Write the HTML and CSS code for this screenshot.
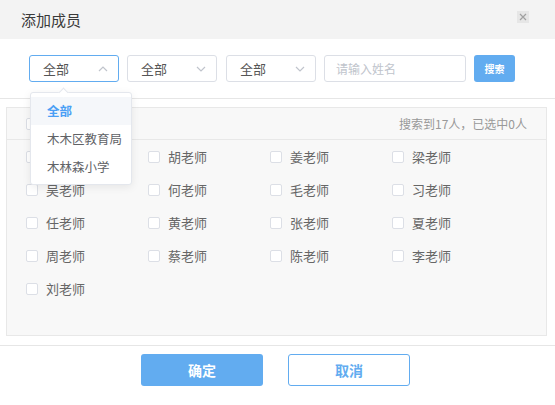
FILE: index.html
```html
<!DOCTYPE html>
<html lang="zh">
<head>
<meta charset="utf-8">
<title>添加成员</title>
<link rel="stylesheet" href="styles.css">
</head>
<body>
<div class="dialog">
  <div class="header">
    <span class="title">添加成员</span>
    <span class="close">
      <svg width="8" height="8" viewBox="0 0 8 8"><path d="M1 1L7 7M7 1L1 7" stroke="#a0a0a0" stroke-width="1.2"/></svg>
    </span>
  </div>
  <div class="filters">
    <div class="select active">
      <span>全部</span>
      <svg class="chev" width="10" height="6" viewBox="0 0 10 6"><path d="M1 5L5 1L9 5" fill="none" stroke="#c0c4cc" stroke-width="1.2"/></svg>
      <div class="dropdown">
        <div class="arrow"></div>
        <div class="opt selected">全部</div>
        <div class="opt">木木区教育局</div>
        <div class="opt">木林森小学</div>
      </div>
    </div>
    <div class="select">
      <span>全部</span>
      <svg class="chev" width="10" height="6" viewBox="0 0 10 6"><path d="M1 1L5 5L9 1" fill="none" stroke="#c0c4cc" stroke-width="1.2"/></svg>
    </div>
    <div class="select s3">
      <span>全部</span>
      <svg class="chev" width="10" height="6" viewBox="0 0 10 6"><path d="M1 1L5 5L9 1" fill="none" stroke="#c0c4cc" stroke-width="1.2"/></svg>
    </div>
    <div class="input">请输入姓名</div>
    <div class="search">搜索</div>
  </div>
  <div class="divider"></div>
  <div class="listbox">
    <div class="list-head">
      <span class="cb"></span>
      <span class="count">搜索到17人，已选中0人</span>
    </div>
    <div class="grid">
      <div class="item"><span class="cb"></span>吴老师</div>
      <div class="item"><span class="cb"></span>胡老师</div>
      <div class="item"><span class="cb"></span>姜老师</div>
      <div class="item"><span class="cb"></span>梁老师</div>
      <div class="item"><span class="cb"></span>吴老师</div>
      <div class="item"><span class="cb"></span>何老师</div>
      <div class="item"><span class="cb"></span>毛老师</div>
      <div class="item"><span class="cb"></span>习老师</div>
      <div class="item"><span class="cb"></span>任老师</div>
      <div class="item"><span class="cb"></span>黄老师</div>
      <div class="item"><span class="cb"></span>张老师</div>
      <div class="item"><span class="cb"></span>夏老师</div>
      <div class="item"><span class="cb"></span>周老师</div>
      <div class="item"><span class="cb"></span>蔡老师</div>
      <div class="item"><span class="cb"></span>陈老师</div>
      <div class="item"><span class="cb"></span>李老师</div>
      <div class="item"><span class="cb"></span>刘老师</div>
    </div>
  </div>
  <div class="divider foot-line"></div>
  <div class="footer">
    <div class="btn primary">确定</div>
    <div class="btn plain">取消</div>
  </div>
</div>
</body>
</html>
```
FILE: styles.css
```css
html, body {
  margin: 0;
  padding: 0;
  background: #fff;
}
body {
  font-family: "Noto Sans CJK SC", "Noto Sans", sans-serif;
  width: 555px;
  height: 405px;
  overflow: hidden;
}
.dialog {
  width: 555px;
}
.header {
  height: 39px;
  background: #f3f3f3;
  display: flex;
  align-items: center;
  justify-content: space-between;
  padding: 0 26px 0 21px;
}
.title {
  font-size: 15px;
  color: #3a3a3a;
}
.close {
  width: 12px;
  height: 12px;
  background: #e6e6e6;
  display: flex;
  align-items: center;
  justify-content: center;
  margin-top: -5px;
}
.filters {
  display: flex;
  align-items: center;
  padding: 16px 0 16px 29px;
}
.select {
  position: relative;
  width: 90px;
  height: 27px;
  box-sizing: border-box;
  border: 1px solid #dcdfe6;
  border-radius: 3px;
  display: flex;
  align-items: center;
  justify-content: space-between;
  padding: 0 10px 0 13px;
  margin-right: 8px;
  font-size: 13px;
  color: #555;
}
.select.s3 {
  margin-left: 1px;
}
.select.active {
  border-color: #62acf0;
}
.chev {
  display: block;
}
.input {
  width: 142px;
  height: 27px;
  box-sizing: border-box;
  border: 1px solid #dcdfe6;
  border-radius: 3px;
  display: flex;
  align-items: center;
  padding-left: 11px;
  font-size: 12px;
  color: #c0c4cc;
  margin-right: 8px;
}
.search {
  width: 41px;
  height: 27px;
  background: #62acf0;
  border-radius: 3px;
  color: #fff;
  font-size: 10px;
  font-weight: bold;
  display: flex;
  align-items: center;
  justify-content: center;
}
.dropdown {
  position: absolute;
  top: 36px;
  left: 0;
  width: 102px;
  box-sizing: border-box;
  background: #fff;
  border: 1px solid #e4e7ed;
  border-radius: 3px;
  box-shadow: 0 2px 8px rgba(0, 0, 0, 0.08);
  padding: 4px 0 3px;
  z-index: 10;
}
.arrow {
  position: absolute;
  top: -4px;
  left: 29px;
  width: 6px;
  height: 6px;
  background: #fff;
  border-left: 1px solid #e4e7ed;
  border-top: 1px solid #e4e7ed;
  transform: rotate(45deg);
}
.opt {
  height: 28px;
  line-height: 28px;
  padding-left: 16px;
  font-size: 12.5px;
  color: #606266;
}
.opt.selected {
  background: #f5f7fa;
  color: #4a9ff5;
  font-weight: bold;
}
.divider {
  height: 1px;
  background: #e6e6e6;
}
.listbox {
  margin: 8px 0 0 6px;
  width: 541px;
  height: 229px;
  box-sizing: border-box;
  border: 1px solid #e8e8e8;
  background: #f8f8f8;
}
.list-head {
  height: 32px;
  box-sizing: border-box;
  border-bottom: 1px solid #e8e8e8;
  display: flex;
  align-items: center;
  justify-content: space-between;
  padding: 0 19px 0 19px;
}
.count {
  font-size: 12px;
  color: #999;
}
.cb {
  display: inline-block;
  width: 12px;
  height: 12px;
  box-sizing: border-box;
  border: 1px solid #dcdfe6;
  border-radius: 2px;
  background: #fff;
  flex: none;
}
.grid {
  display: grid;
  grid-template-columns: repeat(4, 122px);
  grid-auto-rows: 33px;
  padding: 0 0 0 19px;
}
.item {
  display: flex;
  align-items: center;
  font-size: 13px;
  color: #666;
}
.item .cb {
  margin-right: 8px;
}
.foot-line {
  margin-top: 9px;
}
.footer {
  display: flex;
  justify-content: center;
  padding: 8px 4px 0 0;
  gap: 25px;
}
.btn {
  width: 122px;
  height: 32px;
  box-sizing: border-box;
  border-radius: 3px;
  display: flex;
  align-items: center;
  justify-content: center;
  font-size: 14px;
  font-weight: bold;
}
.btn.primary {
  background: #62acf0;
  color: #fff;
}
.btn.plain {
  border: 1px solid #62acf0;
  color: #62acf0;
  background: #fff;
}
```
